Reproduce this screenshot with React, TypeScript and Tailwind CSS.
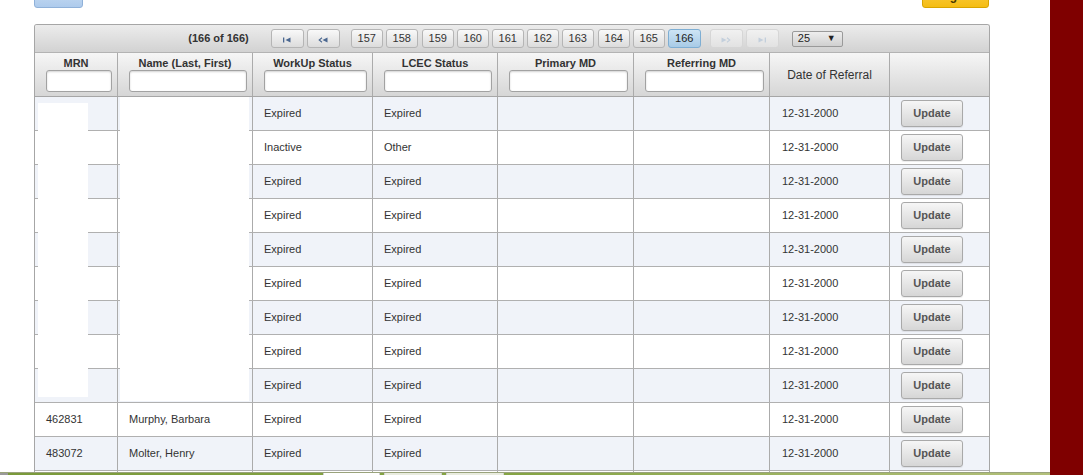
import React from "react";

const GRID = "grid grid-cols-[83px_135px_120px_125px_136px_136px_120px_1fr]";

type Row = { mrn: string; name: string; work: string; lcec: string; date: string; btn: boolean };

const rows: Row[] = [
  { mrn: "", name: "", work: "Expired", lcec: "Expired", date: "12-31-2000", btn: true },
  { mrn: "", name: "", work: "Inactive", lcec: "Other", date: "12-31-2000", btn: true },
  { mrn: "", name: "", work: "Expired", lcec: "Expired", date: "12-31-2000", btn: true },
  { mrn: "", name: "", work: "Expired", lcec: "Expired", date: "12-31-2000", btn: true },
  { mrn: "", name: "", work: "Expired", lcec: "Expired", date: "12-31-2000", btn: true },
  { mrn: "", name: "", work: "Expired", lcec: "Expired", date: "12-31-2000", btn: true },
  { mrn: "", name: "", work: "Expired", lcec: "Expired", date: "12-31-2000", btn: true },
  { mrn: "", name: "", work: "Expired", lcec: "Expired", date: "12-31-2000", btn: true },
  { mrn: "", name: "", work: "Expired", lcec: "Expired", date: "12-31-2000", btn: true },
  { mrn: "462831", name: "Murphy, Barbara", work: "Expired", lcec: "Expired", date: "12-31-2000", btn: true },
  { mrn: "483072", name: "Molter, Henry", work: "Expired", lcec: "Expired", date: "12-31-2000", btn: true },
  { mrn: "", name: "", work: "", lcec: "", date: "", btn: false },
];

function PagerIcon({ kind, faded }: { kind: "first" | "prev" | "next" | "last"; faded?: boolean }) {
  const c = faded ? "#c3cfdc" : "#4a6790";
  return (
    <svg width="10" height="6" viewBox="0 0 10 6" className="mt-[3px]">
      {kind === "first" && (
        <>
          <rect x="1" y="0.5" width="1.3" height="5" fill={c} />
          <polygon points="3.5,3 8.5,0.5 8.5,5.5" fill={c} />
        </>
      )}
      {kind === "prev" && (
        <>
          <polyline points="4,0.8 1.2,3 4,5.2" fill="none" stroke={c} strokeWidth="1.1" />
          <polygon points="4.5,3 9.5,0.5 9.5,5.5" fill={c} />
        </>
      )}
      {kind === "next" && (
        <>
          <polygon points="0.5,0.5 5.5,3 0.5,5.5" fill={c} />
          <polyline points="6,0.8 8.8,3 6,5.2" fill="none" stroke={c} strokeWidth="1.1" />
        </>
      )}
      {kind === "last" && (
        <>
          <polygon points="1.5,0.5 6.5,3 1.5,5.5" fill={c} />
          <rect x="7.7" y="0.5" width="1.3" height="5" fill={c} />
        </>
      )}
    </svg>
  );
}

function PageBtn({ label, active, extra = "" }: { label: string; active?: boolean; extra?: string }) {
  return (
    <div
      className={
        "flex h-[19px] w-[32px] items-center justify-center rounded-[3px] border text-[11px] leading-none " +
        (active
          ? "border-[#7eaed3] bg-linear-to-b from-[#cde4f5] to-[#a8cbe6] text-[#222] "
          : "border-[#b5b5b5] bg-linear-to-b from-[#f9f9f9] to-[#dcdcdc] text-[#333] ") +
        extra
      }
    >
      {label}
    </div>
  );
}

function IconBtn({ kind, faded }: { kind: "first" | "prev" | "next" | "last"; faded?: boolean }) {
  return (
    <div
      className={
        "flex h-[19px] w-[33px] items-center justify-center rounded-[3px] border " +
        (faded
          ? "border-[#d6d6d6] bg-linear-to-b from-[#f1f1f1] to-[#e2e2e2]"
          : "border-[#b5b5b5] bg-linear-to-b from-[#f9f9f9] to-[#dcdcdc]")
      }
    >
      <PagerIcon kind={kind} faded={faded} />
    </div>
  );
}

function FilterHead({ label, last }: { label: string; last?: boolean }) {
  return (
    <div className={"flex flex-col pt-[4px] " + (last ? "" : "border-r border-[#ababab]")}>
      <div className="text-center text-[11px] font-bold leading-[13px] text-[#333]">{label}</div>
      <div className="ml-[11px] mr-[5px] h-[22px] rounded-[3px] border border-[#a2a2a2] bg-white shadow-[inset_0_1px_2px_rgba(0,0,0,0.18)]" />
    </div>
  );
}

function Cell({ children, last, pl = "pl-[11px]" }: { children?: React.ReactNode; last?: boolean; pl?: string }) {
  return (
    <div className={"flex items-center " + pl + " " + (last ? "" : "border-r border-[#ababab]")}>{children}</div>
  );
}

const pages = ["157", "158", "159", "160", "161", "162", "163", "164", "165"];

export default function App() {
  return (
    <div
      className="flex h-[475px] w-[1083px] overflow-hidden bg-white text-[#333]"
      style={{ fontFamily: '"Liberation Sans", Arial, sans-serif' }}
    >
      <div className="relative w-[1050px]">
        <div className="ml-[34px] w-[956px]">
          {/* top buttons, scrolled mostly out of view */}
          <div className="flex h-[24px] items-start justify-between">
            <div className="-mt-[22px] h-[30px] w-[49px] rounded-[3px] border border-[#8fb1d9] bg-linear-to-b from-[#d6e6f7] to-[#aecbec]" />
            <div className="-mt-[22px] mr-[1px] flex h-[30px] w-[67px] justify-center rounded-[3px] border border-[#d8a400] bg-linear-to-b from-[#fcd54a] to-[#f5bd12] pt-[10px] text-[12px] font-bold leading-[14px] text-[#4a3a00]">
              Logout
            </div>
          </div>

          {/* table */}
          <div className="relative overflow-hidden rounded-t-[3px] border border-b-0 border-[#a6a6a6]">
            {/* pager */}
            <div className="flex h-[28px] items-center justify-center border-b border-[#b3b3b3] bg-linear-to-b from-[#ececec] to-[#d2d2d2] pl-[7px]">
              <span className="mr-[22px] text-[11px] font-bold text-[#333]">(166 of 166)</span>
              <div className="flex gap-[3px]">
                <IconBtn kind="first" />
                <IconBtn kind="prev" />
              </div>
              <div className="ml-[11px] flex">
                {pages.map((p, i) => (
                  <PageBtn key={p} label={p} extra={i === 0 ? "" : i === 2 || i === 7 ? "ml-[4px]" : "ml-[3px]"} />
                ))}
                <PageBtn label="166" active extra="ml-[3px] w-[33px]" />
              </div>
              <div className="ml-[9px] flex gap-[3px]">
                <IconBtn kind="next" faded />
                <IconBtn kind="last" faded />
              </div>
              <div className="ml-[13px] flex h-[16px] w-[51px] items-center justify-between rounded-[2px] border border-[#9a9a9a] bg-linear-to-b from-[#eeeeee] to-[#d0d0d0] pl-[5px] pr-[6px] text-[11px] leading-none text-[#222]">
                <span>25</span>
                <span className="text-[9px]">▼</span>
              </div>
            </div>

            {/* header */}
            <div className={GRID + " h-[44px] border-b border-[#a6a6a6] bg-linear-to-b from-[#f6f6f6] to-[#d6d6d6]"}>
              <FilterHead label="MRN" />
              <FilterHead label="Name (Last, First)" />
              <FilterHead label="WorkUp Status" />
              <FilterHead label="LCEC Status" />
              <FilterHead label="Primary MD" />
              <FilterHead label="Referring MD" />
              <div className="flex items-center justify-center border-r border-[#ababab] text-[12px] text-[#333]">
                Date of Referral
              </div>
              <div />
            </div>

            {/* body */}
            <div className="relative">
              {rows.map((r, i) => (
                <div
                  key={i}
                  className={
                    GRID +
                    " h-[34px] border-b border-[#b0b0b0] text-[11px] text-[#333] " +
                    (i % 2 === 0 ? "bg-[#f0f3f9]" : "bg-white")
                  }
                >
                  <Cell>{r.mrn}</Cell>
                  <Cell>{r.name}</Cell>
                  <Cell>{r.work}</Cell>
                  <Cell>{r.lcec}</Cell>
                  <Cell />
                  <Cell />
                  <Cell pl="pl-[12px]">{r.date}</Cell>
                  <Cell last>
                    {r.btn && (
                      <button className="h-[27px] w-[62px] rounded-[3px] border border-[#a9a9a9] bg-linear-to-b from-[#f6f6f6] to-[#d6d6d6] text-[11px] font-bold text-[#555] shadow-[0_1px_1px_rgba(0,0,0,0.08)]">
                        Update
                      </button>
                    )}
                  </Cell>
                </div>
              ))}
              {/* redaction overlays */}
              <div className="absolute left-[3px] top-[6px] h-[294px] w-[50px] bg-white" />
              <div className="absolute left-[85px] top-0 h-[304px] w-[129px] bg-white" />
            </div>
          </div>
        </div>

        {/* bottom taskbar strip */}
        <div className="fixed bottom-0 left-0 flex h-[3px] w-[1050px] border-t border-[#9aa37c] bg-linear-to-r from-[#7a9a3a] via-[#86a544] to-[#b3c07a]">
          <div className="w-[8px] bg-[#9a9a9a]" />
          <div className="ml-[315px] w-[57px] border-x border-[#cfcfcf] bg-white" />
          <div className="ml-[4px] w-[58px] border-x border-[#cfcfcf] bg-[#e9ecdf]" />
          <div className="ml-[4px] w-[58px] border-x border-[#cfcfcf] bg-[#e9ecdf]" />
        </div>
      </div>
      <div className="w-[33px] bg-[#7f0000]" />
    </div>
  );
}
